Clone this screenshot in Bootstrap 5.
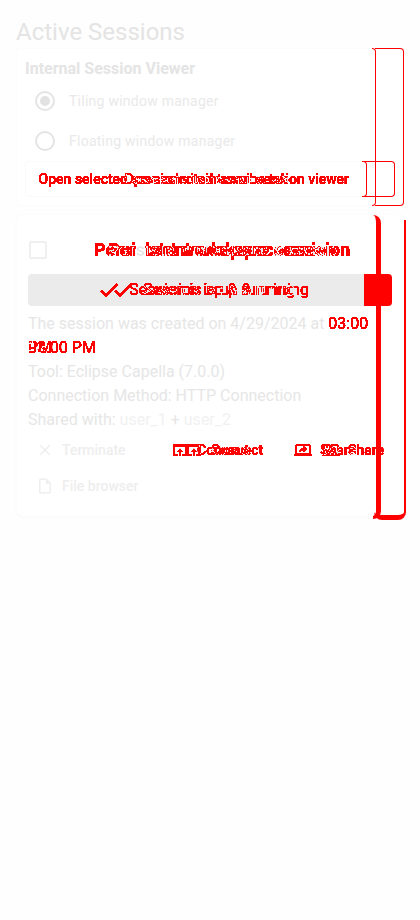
<!DOCTYPE html>
<html lang="en">
<head>
<meta charset="utf-8">
<meta name="viewport" content="width=device-width, initial-scale=1">
<title>Active Sessions</title>
<link href="https://cdn.jsdelivr.net/npm/bootstrap@5.3.0/dist/css/bootstrap.min.css" rel="stylesheet">
<style>
body{font-family:Roboto,"Liberation Sans",sans-serif;background:#fefefe;color:#e6e6e6;font-size:16px;line-height:24px;min-height:920px;overflow:hidden}
.page-title{font-size:24px;line-height:32px;font-weight:400;color:#e4e4e4}
.panel{background:#fff;border:1px solid #fcfcfc;border-radius:4px;width:388px}
.viewer{height:158px;padding:8px 8px 8px 8px}
.session{height:303px;border-radius:8px;padding:23px 11px 0;width:390px;box-shadow:0 1px 3px #fafafa}
.viewer-title{font-size:16px;font-weight:700;color:#e4e4e4}
.choice{height:40px;padding-left:10px;gap:14px;font-size:14px;letter-spacing:.25px;color:#e9e9e9}
.ring{width:20px;height:20px;border:2px solid #e4e4e4;border-radius:50%}
.ring i{width:10px;height:10px;border-radius:50%;background:#e2e2e2}
.open{width:370px;height:36px;border:1px solid #fafafa;border-radius:4px}
.tick{width:18px;height:18px;border:2px solid #efefef;border-radius:2px;margin-left:1px}
.state{background:#ebebeb;height:32px;border-radius:4px;width:364px;margin:12px 0 6px}
.edge{position:absolute;border:solid red;border-width:1px 1px 1px 0}
.fill{position:absolute;left:336px;top:0;width:28px;height:32px;background:red;border-radius:0 4px 4px 0}
/* Two overlaid states; the filter colours their differing pixels red */
.delta{position:relative;display:block;background:#000;isolation:isolate;filter:url(#delta);white-space:nowrap}
.delta>span{position:absolute;top:0;mix-blend-mode:screen;display:flex;align-items:center;height:100%}
.was{color:#f00}.now{color:#0f0}
.d-open{width:335px;height:34px;font-size:14px;font-weight:500}
.d-open .was{left:12.6px}.d-open .now{left:98px}
.d-title{width:275px;height:24px;font-size:18px;font-weight:700;margin-left:43px}
.d-title .was{left:4px}.d-title .now{left:18px}
.d-state{width:336px;height:32px}
.d-state .was{left:69.300px}.d-state .now{left:83.300px}
.d-link{height:36px;font-size:14px;font-weight:500}
.d-link .was{left:4px}.d-link .now{left:18px}
.d-share .was{left:5px}.d-share .now{left:33px}
.info p{margin:0}
.hot{filter:url(#solid);color:red}
.faint{color:#f1f1f1}
.act{height:36px;font-size:14px;font-weight:500;color:#eee}
svg{fill:currentColor;flex:none}
</style>
<script src="https://cdn.jsdelivr.net/npm/bootstrap@5.3.0/dist/js/bootstrap.bundle.min.js"></script>
</head>
<body>
<svg width="0" height="0" class="position-absolute" aria-hidden="true">
<filter id="delta" x="0" y="0" width="1" height="1" color-interpolation-filters="sRGB">
<feColorMatrix in="SourceGraphic" values="0 0 0 0 1  0 0 0 0 0  0 0 0 0 0  30 -30 0 0 -3.5" result="a"/>
<feColorMatrix in="SourceGraphic" values="0 0 0 0 1  0 0 0 0 0  0 0 0 0 0  -30 30 0 0 -3.5" result="b"/>
<feColorMatrix in="SourceGraphic" values="0 0 0 0 .9  0 0 0 0 .9  0 0 0 0 .9  1 1 0 0 -1" result="c"/>
<feMerge><feMergeNode in="c"/><feMergeNode in="a"/><feMergeNode in="b"/></feMerge>
</filter>
<filter id="solid" color-interpolation-filters="sRGB"><feColorMatrix values="0 0 0 0 1  0 0 0 0 0  0 0 0 0 0  0 0 0 30 -3.5"/></filter>
<symbol id="done" viewBox="0 0 24 24"><path d="M9 16.2 4.8 12l-1.4 1.4L9 19 21 7l-1.4-1.4z"/></symbol>
<symbol id="web" viewBox="0 0 24 24"><path d="M19 4H5a2 2 0 0 0-2 2v12c0 1.1.9 2 2 2h4v-2H5V8h14v10h-4v2h4a2 2 0 0 0 2-2V6a2 2 0 0 0-2-2zm-7 6-4 4h3v6h2v-6h3z"/></symbol>
<symbol id="share" viewBox="0 0 24 24"><path d="M20 18a2 2 0 0 0 2-2V6a2 2 0 0 0-2-2H4a2 2 0 0 0-2 2v10c0 1.1.9 2 2 2H0v2h24v-2zM4 16V6h16v10zm3-1c.6-2.7 2.100-5.300 6-5.900V7l4 3.700-4 3.800v-2.200c-2.800 0-4.600.9-6 2.700z"/></symbol>
</svg>
<main class="ps-3 pt-3">
<h1 class="page-title mb-0">Active Sessions</h1>
<section class="panel viewer position-relative mb-2">
<h2 class="viewer-title mb-0 lh-base">Internal Session Viewer</h2>
<div class="choice d-flex align-items-center"><span class="ring d-flex align-items-center justify-content-center"><i></i></span>Tiling window manager</div>
<div class="choice d-flex align-items-center"><span class="ring"></span>Floating window manager</div>
<div class="open position-relative">
<div class="delta d-open"><span class="was">Open selected sessions in internal session viewer</span><span class="now">Open selected session tab</span></div>
<span class="edge" style="left:338px;top:-1px;width:31px;height:36px;border-radius:0 4px 4px 0"></span>
<span class="edge" style="left:336px;top:-1px;width:5px;height:36px;border-radius:0 4px 4px 0"></span>
</div>
<span class="edge" style="left:358px;top:-1px;width:29px;height:158px;border-radius:0 4px 4px 0"></span>
<span class="edge" style="left:355px;top:-1px;width:4px;height:158px;border-radius:0 4px 4px 0"></span>
</section>
<section class="panel session position-relative">
<div class="d-flex align-items-center"><span class="tick"></span><div class="delta d-title"><span class="was">Persistent workspace session</span><span class="now">Persistent workspace session</span></div></div>
<div class="state position-relative">
<div class="delta d-state"><span class="was"><svg width="24" height="24" class="me-2"><use href="#done"/></svg>Session is up &amp; running</span><span class="now"><svg width="24" height="24" class="me-2"><use href="#done"/></svg>Session is up &amp; running</span></div>
<span class="fill"></span></div>
<div class="info">
<p class="text-nowrap">The session was created on 4/29/2024 at <span class="hot">03:00</span></p>
<div class="delta" style="width:80px;height:24px"><span class="was">PM</span><span class="now">03:00 PM</span></div>
<p>Tool: Eclipse Capella (7.0.0)</p>
<p>Connection Method: HTTP Connection</p>
<p>Shared with: <span class="faint">user_1</span> + <span class="faint">user_2</span></p>
</div>
<div class="d-flex act">
<div class="d-flex align-items-center" style="width:139px;padding-left:8px;gap:8px"><svg width="18" height="18" viewBox="0 0 24 24"><path d="M19 6.400 17.600 5 12 10.600 6.400 5 5 6.400 10.600 12 5 17.600 6.400 19 12 13.400 17.600 19 19 17.600 13.400 12z"/></svg>Terminate</div>
<div class="delta d-link" style="width:122px"><span class="was"><svg width="18" height="18" class="me-2"><use href="#web"/></svg>Connect</span><span class="now"><svg width="18" height="18" class="me-2"><use href="#web"/></svg>Connect</span></div>
<div class="delta d-link d-share" style="width:103px"><span class="was"><svg width="18" height="18" class="me-2"><use href="#share"/></svg>Share</span><span class="now"><svg width="18" height="18" class="me-2"><use href="#share"/></svg>Share</span></div>
</div>
<div class="act d-flex align-items-center" style="padding-left:8px;gap:8px"><svg width="18" height="18" viewBox="0 0 24 24"><path d="M14 2H6a2 2 0 0 0-2 2v16c0 1.100.9 2 2 2h12a2 2 0 0 0 2-2V8zM6 20V4h7v5h5v11z"/></svg>File browser</div>
<span class="edge" style="left:356px;top:0;width:8px;height:304px;border-width:0 5px 3px 0;border-radius:0 8px 8px 0"></span>
<span class="edge" style="left:357px;top:5px;width:32px;height:300px;border-width:0 2px 5px 0;border-radius:0 0 8px 8px"></span>
</section>
</main>
</body>
</html>
